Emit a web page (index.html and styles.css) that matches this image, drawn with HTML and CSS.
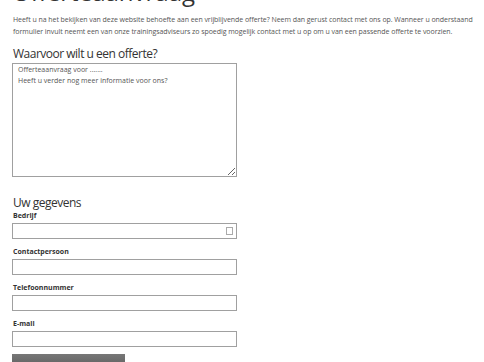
FILE: index.html
```html
<!DOCTYPE html>
<html lang="nl">
<head>
    <meta charset="UTF-8">
    <title>Offerteaanvraag</title>
    <link rel="stylesheet" href="styles.css">
</head>
<body>
    <main class="inhoud">
        <h1 class="titel">Offerteaanvraag</h1>
        <p class="intro">Heeft u na het bekijken van deze website behoefte aan een vrijblijvende offerte? Neem dan gerust contact met ons op. Wanneer u onderstaand formulier invult neemt een van onze trainingsadviseurs zo spoedig mogelijk contact met u op om u van een passende offerte te voorzien.</p>

        <form class="formulier">
            <h2 class="kop">Waarvoor wilt u een offerte?</h2>
            <textarea class="vraag">Offerteaanvraag voor .......
Heeft u verder nog meer informatie voor ons?</textarea>

            <h2 class="kop kop-gegevens">Uw gegevens</h2>
            <label class="veld">
                <span>Bedrijf</span>
                <span class="invoer-wrap">
                    <input type="text">
                    <span class="invoer-icoon"></span>
                </span>
            </label>
            <label class="veld">
                <span>Contactpersoon</span>
                <input type="text">
            </label>
            <label class="veld">
                <span>Telefoonnummer</span>
                <input type="text">
            </label>
            <label class="veld">
                <span>E-mail</span>
                <input type="text">
            </label>
            <button type="button" class="knop">Verzenden</button>
        </form>
    </main>
</body>
</html>
```

FILE: styles.css
```css
body {
    background-color: #ffffff;
    font-family: "Open Sans", sans-serif;
    color: #444444;
    margin: 0;
    padding: 0;
}
.inhoud {
    padding: 0 12px;
    width: 464px;
}
.titel {
    font-size: 24px;
    font-weight: 400;
    color: #333333;
    margin: -23px 0 0 0;
    line-height: 30px;
}
.intro {
    font-size: 7px;
    line-height: 12px;
    margin: 7px 0 0 1px;
    color: #555555;
    letter-spacing: -0.05px;
}
.formulier {
    display: flex;
    flex-direction: column;
    align-items: flex-start;
}
.kop {
    font-size: 12px;
    font-weight: 400;
    color: #333333;
    margin: 8px 0 0 1px;
    line-height: 16px;
    letter-spacing: -0.5px;
}
.kop-gegevens {
    margin-top: 18px;
}
.vraag {
    box-sizing: border-box;
    width: 225px;
    height: 114px;
    margin: 1px 0 0 0;
    border: 1px solid #a0a0a0;
    padding: 0 5px;
    font-family: "Open Sans", sans-serif;
    font-size: 7px;
    line-height: 11px;
    color: #555555;
    resize: both;
}
.veld {
    display: flex;
    flex-direction: column;
    font-size: 7px;
    font-weight: 700;
    color: #333333;
    line-height: 10px;
    margin-bottom: 8px;
}
.veld span:first-child {
    margin-left: 1px;
    margin-bottom: 2px;
}
.veld input {
    box-sizing: border-box;
    width: 225px;
    height: 16px;
    border: 1px solid #a0a0a0;
    margin: 0;
}
.invoer-wrap {
    position: relative;
    display: block;
}
.invoer-icoon {
    position: absolute;
    right: 4px;
    top: 4px;
    width: 5px;
    height: 6px;
    border: 1px solid #aaaaaa;
}
.knop {
    width: 113px;
    height: 26px;
    border: none;
    padding: 4px 0 0 0;
    background: linear-gradient(#777777, #4a4a4a);
    color: #ffffff;
    font-family: "Open Sans", sans-serif;
    font-size: 12px;
    margin-top: -1px;
}
```
